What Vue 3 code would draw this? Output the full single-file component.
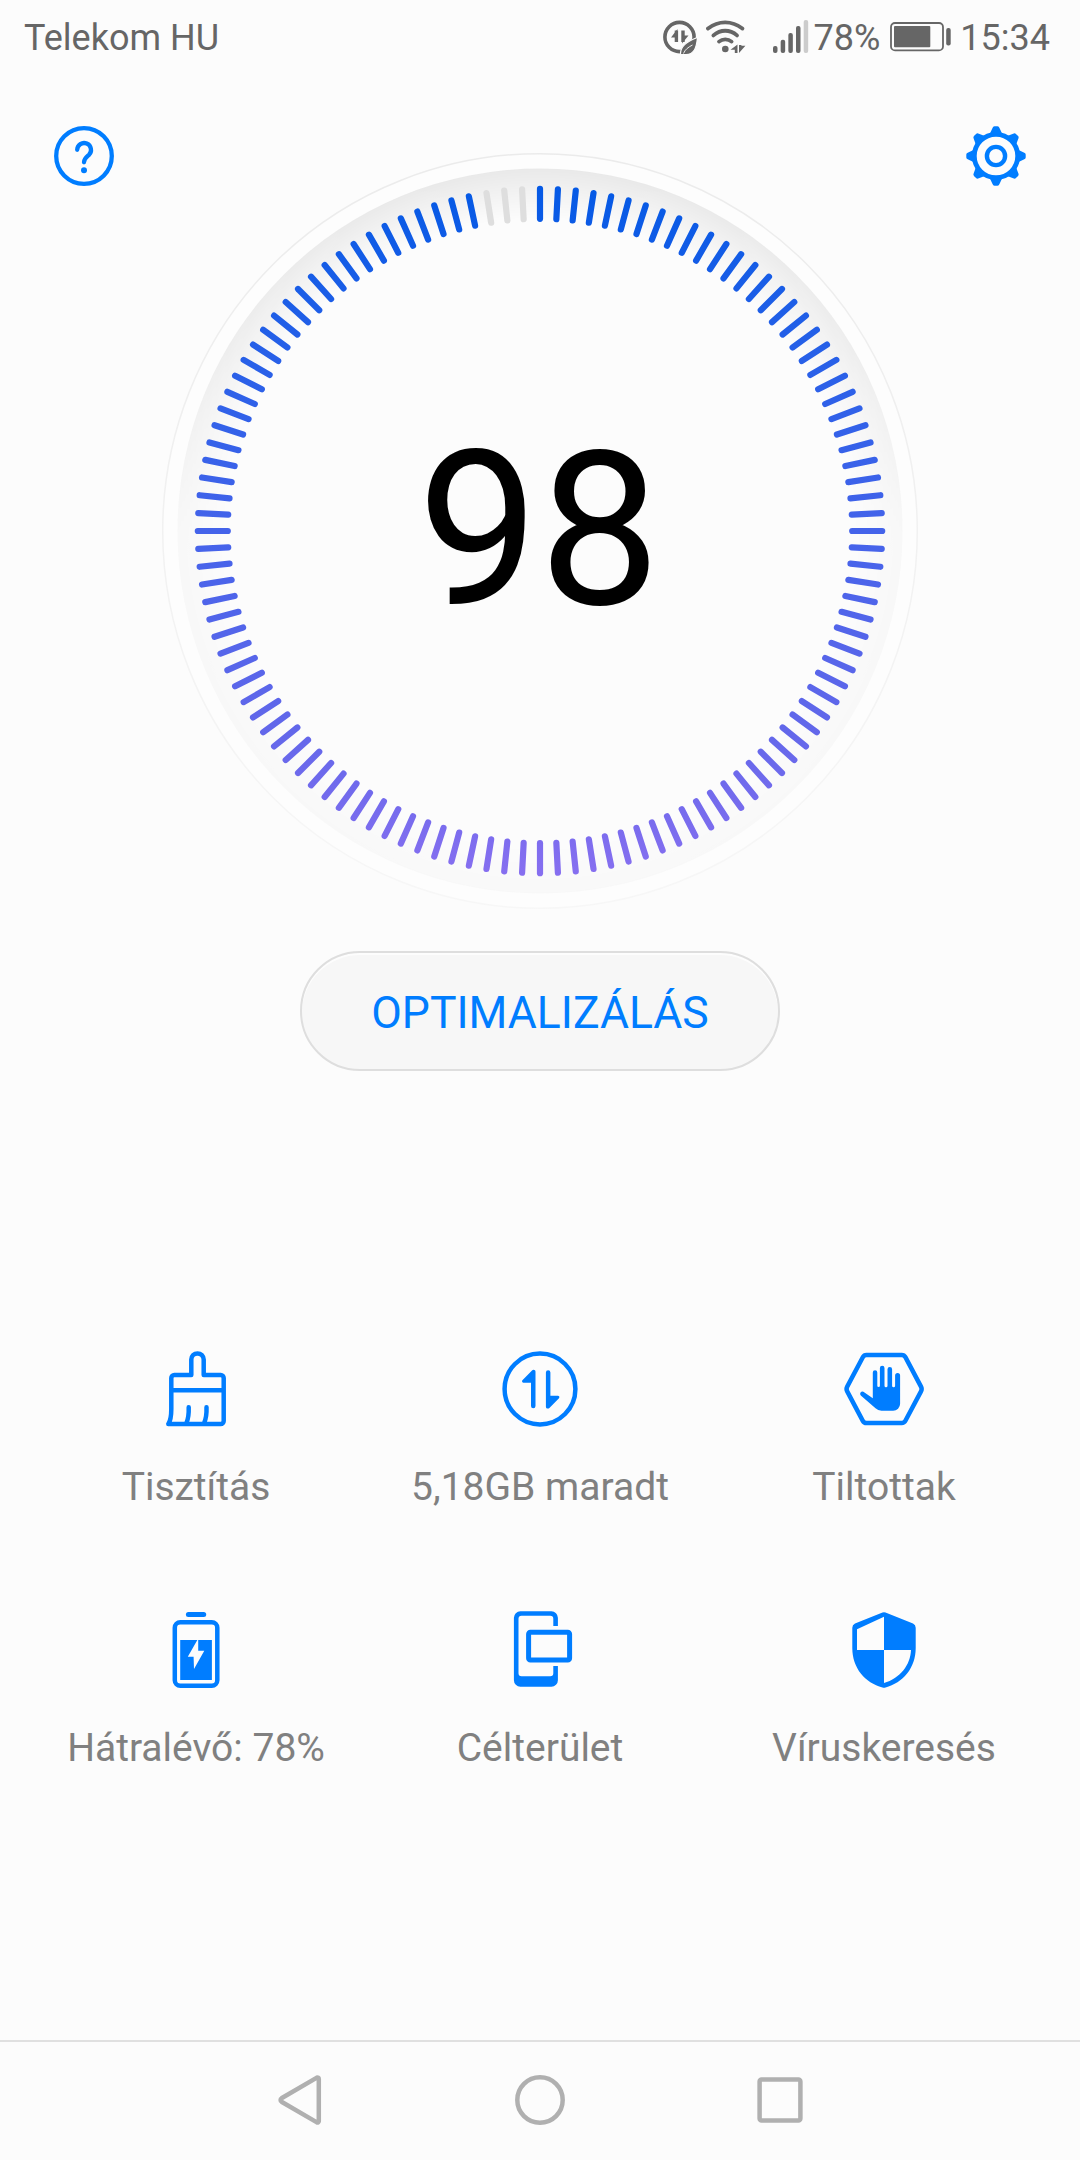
<template>
	<div class="phone">
		<header class="status">
			<span class="status__carrier">Telekom HU</span>
			<div class="status__icons">
				<svg class="status__saver" width="34" height="34" viewBox="0 0 34 34" fill="none">
					<circle cx="16.5" cy="17" r="14.6" stroke="currentColor" stroke-width="3.6" />
					<path d="M13.4 10.6V22M20 10.6V22" stroke="currentColor" stroke-width="3.4" />
					<path d="M14.5 9L8 17.500h6zM19 23.500L25.500 15.500h-6z" fill="currentColor" />
					<path d="M34.500 17.500C33.500 28 31 34.500 23 34.500h-5.500C17 27 22 22 34.500 17.500z" fill="currentColor"
						stroke="#fcfcfc" stroke-width="1.200" />
					<path d="M20.500 33.500C22 29.500 25.500 27 29.500 25" stroke="#fcfcfc" stroke-width="0.900" />
				</svg>
				<svg class="status__wifi" width="40" height="34" viewBox="0 0 40 34" fill="none">
					<g stroke="currentColor" stroke-width="3.800" stroke-linecap="round">
						<path d="M2 8.600C12.500 0.400 25.800 0.400 36.400 8.600" />
						<path d="M7.400 15.400C14.500 9.200 23.800 9.200 31 15.400" />
						<path d="M13 21.600C16.600 18.600 22 18.600 25.600 21.600" />
					</g>
					<circle cx="19.300" cy="29" r="3.300" fill="currentColor" />
					<path d="M31.500 24.500v8.500h-2.700v-3.200h-4.300zM33 25v8l6.400-7.200H35.400V25z" fill="currentColor" />
				</svg>
				<svg class="status__signal" width="36" height="34" viewBox="0 0 36 34">
					<rect v-for="(bar, i) in signal" :key="i" :x="i * 7.67" :y="33 - bar" width="4.500" :height="bar"
						rx="2" :fill="i < 4 ? 'currentColor' : '#cccccc'" />
				</svg>
				<span class="status__percent">78%</span>
				<svg class="status__battery" width="62" height="30" viewBox="0 0 62 30" fill="currentColor">
					<rect x="1" y="1" width="52" height="27.400" rx="4" fill="none" stroke="currentColor"
						stroke-width="1.800" />
					<rect x="4" y="4" width="36.300" height="21.200" rx="1" />
					<rect x="56.200" y="6" width="4.500" height="17.400" rx="2" />
				</svg>
				<span class="status__time">15:34</span>
			</div>
		</header>

		<section class="hero">
			<button class="icon-btn">
				<svg width="60" height="60" viewBox="0 0 60 60" fill="none" stroke="currentColor" stroke-width="4.300"
					stroke-linecap="round">
					<circle cx="30" cy="30" r="27.800" />
					<path d="M23.200 23.800a6.900 6.900 0 1 1 11.800 5C32 31.500 30 32.800 30 36.300" />
					<circle cx="30" cy="44.300" r="3" fill="currentColor" stroke="none" />
				</svg>
			</button>

			<svg class="gauge" width="760" height="760" viewBox="0 0 760 760">
				<defs>
					<linearGradient id="tick" gradientUnits="userSpaceOnUse" x1="0" y1="34" x2="0" y2="726">
						<stop offset="0" stop-color="#0459e5" />
						<stop offset="0.250" stop-color="#2860e8" />
						<stop offset="0.500" stop-color="#4463ea" />
						<stop offset="0.780" stop-color="#6167ea" />
						<stop offset="1" stop-color="#876ff0" />
					</linearGradient>
					<linearGradient id="outline" gradientUnits="userSpaceOnUse" x1="0" y1="0" x2="0" y2="760">
						<stop offset="0" stop-color="#ebebeb" />
						<stop offset="1" stop-color="#f7f7f7" />
					</linearGradient>
					<radialGradient id="shade" gradientUnits="userSpaceOnUse" cx="380" cy="380" r="363">
						<stop offset="0.860" stop-color="#000" stop-opacity="0" />
						<stop offset="1" stop-color="#000" stop-opacity="0.075" />
					</radialGradient>
					<linearGradient id="fade" gradientUnits="userSpaceOnUse" x1="0" y1="17" x2="0" y2="743">
						<stop offset="0" stop-color="#fff" />
						<stop offset="0.250" stop-color="#c4c4c4" />
						<stop offset="0.500" stop-color="#3c3c3c" />
						<stop offset="1" stop-color="#303030" />
					</linearGradient>
					<mask id="shade-mask">
						<rect width="760" height="760" fill="url(#fade)" />
					</mask>
				</defs>
				<circle cx="380" cy="380" r="377.300" fill="#fdfdfd" stroke="url(#outline)" stroke-width="1.500" />
				<circle cx="380" cy="380" r="362.500" fill="#fcfcfc" />
				<circle cx="380" cy="380" r="362.500" fill="url(#shade)" mask="url(#shade-mask)" />
				<line v-for="t in ticks" :key="t.id" :x1="t.x1" :y1="t.y1" :x2="t.x2" :y2="t.y2"
					:stroke="t.on ? 'url(#tick)' : '#dedede'" stroke-width="6.200" stroke-linecap="round" />
				<text class="gauge__score" x="379" y="452.800" text-anchor="middle">{{ score }}</text>
			</svg>

			<button class="icon-btn">
				<svg width="60" height="60" viewBox="0 0 60 60" fill="none" stroke="currentColor">
					<circle cx="30" cy="30" r="21.700" stroke-width="4.800" />
					<circle cx="30" cy="30" r="9.100" stroke-width="4.400" />
					<path v-for="n in 8" :key="n" :transform="`rotate(${n * 45} 30 30)`"
						d="M23.500 8.500L26.400 2.200Q27 0.300 28.500 0.300h3Q33 0.300 33.600 2.200L36.500 8.500z" fill="currentColor"
						stroke="none" />
				</svg>
			</button>
		</section>

		<button class="optimize">OPTIMALIZÁLÁS</button>

		<section class="grid">
			<div class="grid__item">
				<svg class="grid__icon" viewBox="0 0 84 84">
					<path
						d="M37.300 28V12.600a6.200 6.200 0 0 1 12.400 0V28H66.700a3 3 0 0 1 3 3V74a3 3 0 0 1-3 3H14.300C16.800 73.500 17.300 68 17.300 62V31a3 3 0 0 1 3-3zM17.300 43.300H69.700M34.700 60.300C34.900 66 34.500 71 32.500 75.800M52.500 60.300C52.700 66 52.300 71 50.200 75.800" />
				</svg>
				<span class="grid__label">Tisztítás</span>
			</div>
			<div class="grid__item">
				<svg class="grid__icon" viewBox="0 0 84 84">
					<circle cx="42" cy="42" r="35.400" />
					<path class="solid" :d="arrow" />
					<path class="solid" :d="arrow" transform="rotate(180 42.700 42.200)" />
				</svg>
				<span class="grid__label">5,18GB maradt</span>
			</div>
			<div class="grid__item">
				<svg class="grid__icon" viewBox="0 0 84 84">
					<path
						d="M24.500 8H59.700q2.500 0 3.700 2.200L79 39.600q1.300 2.400 0 4.800L63.400 73.800q-1.200 2.200-3.700 2.200H24.500q-2.500 0-3.700-2.200L5.200 44.400q-1.300-2.400 0-4.800L20.800 10.200q1.200-2.200 3.700-2.200z" />
					<path class="solid"
						d="M30.800 51.300V25.500a2.200 2.200 0 0 1 4.500 0V38.800a1.300 1.300 0 0 0 2.600 0V21a2.300 2.300 0 0 1 4.600 0V38.800a1.500 1.500 0 0 0 3 0V22.300a2.300 2.300 0 0 1 4.600 0V38.800a1.500 1.500 0 0 0 3 0V28.400a2.500 2.500 0 0 1 5 0V56.700a7 7 0 0 1-7 7H39.500q-3.600 0-6-2.400L18.800 48.600a2.400 2.400 0 0 1 2.600-3.900z" />
				</svg>
				<span class="grid__label">Tiltottak</span>
			</div>
			<div class="grid__item">
				<svg class="grid__icon" viewBox="0 0 84 84">
					<rect class="solid" x="31.900" y="4" width="20.300" height="5" rx="2.500" />
					<rect x="20.800" y="14.300" width="42.500" height="63.400" rx="5.500" />
					<path class="solid" d="M26.200 32H57.900V72H26.200z" />
					<path class="blank" d="M44.200 30.500L33.800 48.700h5.800L40 61 50.300 42.700H44.200z" />
				</svg>
				<span class="grid__label">Hátralévő: 78%</span>
			</div>
			<div class="grid__item">
				<svg class="grid__icon" viewBox="0 0 84 84">
					<path class="solid"
						d="M22.400 3.300H53.400a6.500 6.500 0 0 1 6.500 6.500V18H55.300V10.700a3 3 0 0 0-3-3H23.500a3 3 0 0 0-3 3V65.300a3 3 0 0 0 3 3H52.300a3 3 0 0 0 3-3V58H59.900V72.200a6.500 6.500 0 0 1-6.500 6.500H22.400a6.500 6.500 0 0 1-6.500-6.500V9.800a6.500 6.500 0 0 1 6.500-6.500z" />
					<rect class="thick" x="30.600" y="24.300" width="41" height="27.800" rx="1.800" />
				</svg>
				<span class="grid__label">Célterület</span>
			</div>
			<div class="grid__item">
				<svg class="grid__icon" viewBox="0 0 84 84">
					<path class="solid"
						d="M40.500 4.500Q42 3.800 43.500 4.500L71 15.500Q73.700 16.700 73.700 19.700V40C73.700 60 61 75 43.500 79.400Q42 79.900 40.500 79.400C23 75 10.300 60 10.300 40V19.700Q10.300 16.700 13 15.500z" />
					<path class="blank" d="M42 8.700V42H15V21.300zM42 42H69C68.500 57 58 70.500 42 75z" />
				</svg>
				<span class="grid__label">Víruskeresés</span>
			</div>
		</section>

		<nav class="nav">
			<svg class="nav__icon" viewBox="0 0 60 60">
				<path d="M46.900 7.600L11.500 28.300a2 2 0 0 0 0 3.400L46.900 52.400a1.300 1.300 0 0 0 1.900-1.200V8.800a1.300 1.300 0 0 0-1.900-1.200z" />
			</svg>
			<svg class="nav__icon" viewBox="0 0 60 60">
				<circle cx="30" cy="30" r="22.700" />
			</svg>
			<svg class="nav__icon" viewBox="0 0 60 60">
				<rect x="9.600" y="9.600" width="40.800" height="40.800" rx="2" />
			</svg>
		</nav>
	</div>
</template>

<script setup>
import { computed, ref } from "vue";

const score = ref(98);
const signal = [7, 13.3, 20, 27, 33];
const arrow = "M33 35.700H25.500a1.500 1.500 0 0 1-1.100-2.500L34 23.400c1.400-1.200 3.500-.5 3.500 1.300V59a2.250 2.250 0 0 1-4.500 0z";

const TICKS = 120;
const CENTER = 380;

const ticks = computed(() => {
	const filled = Math.floor((TICKS * score.value) / 100);
	return Array.from({ length: TICKS }, (_, i) => {
		const a = (i * 2 * Math.PI) / TICKS;
		return {
			id: i,
			on: i < filled,
			x1: CENTER + 312.2 * Math.sin(a),
			y1: CENTER - 312.2 * Math.cos(a),
			x2: CENTER + 342.2 * Math.sin(a),
			y2: CENTER - 342.2 * Math.cos(a),
		};
	});
});
</script>

<style>
body {
	margin: 0;
	background: #fcfcfc;
}
</style>

<style scoped>
.phone {
	box-sizing: border-box;
	width: 1080px;
	height: 2160px;
	display: flex;
	flex-direction: column;
	background: #fcfcfc;
	font-family: Roboto, "Noto Sans", sans-serif;
	overflow: hidden;
}

button {
	font-family: inherit;
	padding: 0;
	border: none;
	background: none;
}

.status {
	flex: none;
	display: flex;
	justify-content: space-between;
	height: 74px;
	padding: 0 30px 0 24px;
	font-size: 36px;
	line-height: 76px;
	color: #666666;
}

.status__icons {
	display: flex;
	align-items: center;
	height: 74px;
}

.status__wifi {
	margin-left: 9px;
}

.status__signal {
	margin-left: 27px;
}

.status__percent,
.status__time {
	padding-top: 1px;
}

.status__percent {
	margin-left: 5px;
}

.status__battery {
	margin-left: 10px;
}

.status__time {
	margin-left: 8px;
}

.hero {
	flex: none;
	display: flex;
	justify-content: space-between;
	align-items: flex-start;
	padding: 52px 54px 0;
}

.icon-btn {
	width: 60px;
	height: 60px;
	color: #007dff;
}

.icon-btn svg {
	display: block;
}

.gauge {
	flex: none;
	margin-top: 25px;
}

.gauge__score {
	font-size: 216px;
	fill: #000000;
}

.optimize {
	flex: none;
	align-self: center;
	box-sizing: border-box;
	width: 480px;
	height: 120px;
	margin-top: 40px;
	padding-top: 4px;
	border: 2px solid #dedede;
	border-radius: 60px;
	background: #f7f7f7;
	box-shadow: inset 0 2px 0 #fdfdfd;
	font-size: 44.5px;
	color: #007dff;
}

.grid {
	flex: none;
	display: grid;
	grid-template-columns: repeat(3, 344px);
	justify-content: center;
	row-gap: 98px;
	margin-top: 276px;
}

.grid__item {
	display: flex;
	flex-direction: column;
	align-items: center;
	gap: 33px;
}

.grid__icon {
	width: 84px;
	height: 84px;
	fill: none;
	stroke: #007dff;
	stroke-width: 4.5;
	stroke-linecap: round;
	stroke-linejoin: round;
}

.grid__icon .solid {
	fill: #007dff;
	stroke: none;
}

.grid__icon .blank {
	fill: #fcfcfc;
	stroke: none;
}

.grid__icon .thick {
	stroke-width: 5;
}

.grid__label {
	font-size: 39px;
	line-height: 46px;
	white-space: nowrap;
	color: #808080;
}

.nav {
	flex: none;
	display: flex;
	justify-content: center;
	align-items: center;
	gap: 180px;
	box-sizing: border-box;
	height: 120px;
	margin-top: auto;
	padding-bottom: 2px;
	border-top: 2px solid #e0e0e0;
}

.nav__icon {
	width: 60px;
	height: 60px;
	fill: none;
	stroke: #b0b0b0;
	stroke-width: 4.5;
}
</style>
